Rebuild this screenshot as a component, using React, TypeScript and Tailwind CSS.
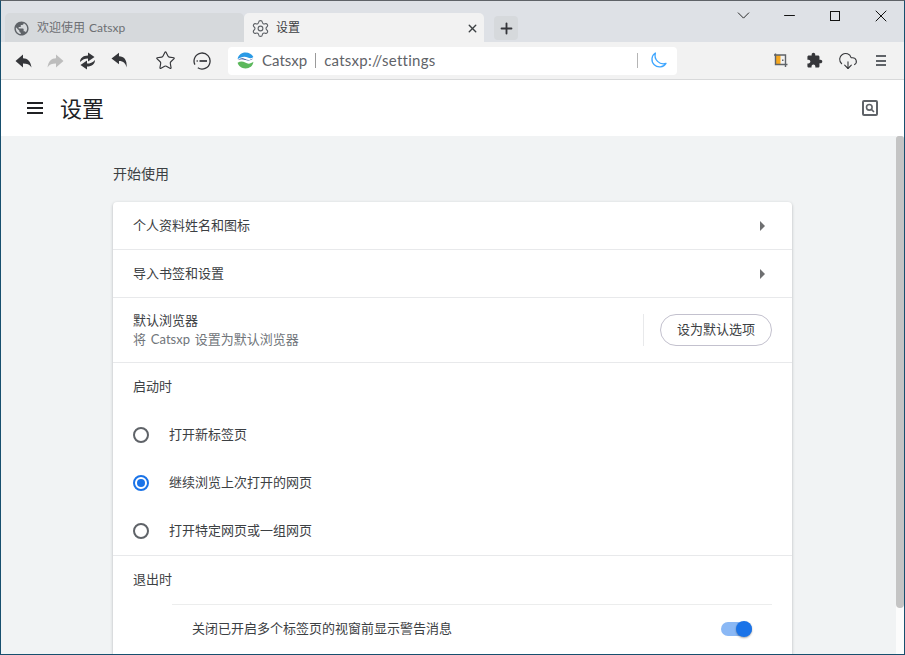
import { ChevronDown, CloudDownload, Minus, Plus, Settings, Star, X } from 'lucide-react'

const font = { fontFamily: '"Lato", "Noto Sans CJK SC", sans-serif' }

function Globe() {
  return (
    <svg width="17" height="17" viewBox="0 0 24 24" fill="#5f6368">
      <path d="M12 2C6.48 2 2 6.48 2 12s4.48 10 10 10 10-4.48 10-10S17.52 2 12 2zm-1 17.93c-3.95-.49-7-3.85-7-7.93 0-.62.08-1.21.21-1.79L9 15v1c0 1.1.9 2 2 2v1.93zm6.9-2.54c-.26-.81-1-1.39-1.9-1.39h-1v-3c0-.55-.45-1-1-1H8v-2h2c.55 0 1-.45 1-1V7h2c1.1 0 2-.9 2-2v-.41c2.93 1.19 5 4.06 5 7.41 0 2.08-.8 3.97-2.1 5.39z" />
    </svg>
  )
}

function Arrow({ color, flip }: { color: string; flip?: boolean }) {
  return (
    <svg width="17" height="16" viewBox="0 0 17 16" fill={color} className={flip ? '-scale-x-100' : ''}>
      <path d="M0.5 8 8 1.5V5.2C12.5 5.2 15.6 8 16.5 14.5 14.6 11.6 12 10.6 8 10.6V14.5Z" />
    </svg>
  )
}

function Reload() {
  return (
    <svg width="17" height="18" viewBox="0 0 17 18" fill="#35363a">
      <path d="M1 10C1 6.2 4 3.4 9 3.4V0.6L15.5 5 9 9.4V6.4C6 6.4 3.4 7.4 1 10Z" />
      <path d="M16 8C16 11.8 13 14.6 8 14.6V17.4L1.5 13 8 8.6V11.6C11 11.6 13.6 10.6 16 8Z" />
    </svg>
  )
}

function Undo() {
  return (
    <svg width="17" height="17" viewBox="0 0 17 17" fill="#35363a">
      <path d="M0.5 6.5 8 0.8V4.2C13 4.2 16.4 8 15.6 15.5 14.6 11.4 12.6 9 8 9V12.2Z" />
    </svg>
  )
}

function Reader() {
  return (
    <svg width="18" height="18" viewBox="0 0 18 18" fill="none" stroke="#35363a">
      <path d="M1.9 12.6A8 8 0 1 1 4.8 15.8" strokeWidth="1.3" />
      <path d="M6.5 9H14" strokeWidth="1.7" />
      <path d="M3.6 9H4.8" strokeWidth="1.7" />
    </svg>
  )
}

function Moon() {
  return (
    <svg width="17" height="17" viewBox="0 0 17 17" fill="none" stroke="#3ea6ff" strokeWidth="1.3">
      <path d="M5.4 1A7.6 7.6 0 1 0 16 11.4 8.4 8.4 0 0 1 5.4 1Z" strokeLinejoin="round" />
    </svg>
  )
}

function Logo() {
  return (
    <svg width="17" height="17" viewBox="0 0 17 17" fill="none">
      <path d="M0.6 7.2C1.4 3 4.4 0.6 8.5 0.6c3.6 0 6.3 1.6 7.9 4.4-1.6 1.5-3.6 1.8-5.6 0.6C8 4 4 4.6 0.6 7.2Z" fill="#2a9ae6" />
      <path d="M0.8 8.2C3 6.2 5.6 5.6 8 7c2.6 1.5 5.4 1.4 8.2-0.8-1.6 1.8-4.6 3-7.6 1.8C6 7 3.2 7 0.8 8.2Z" fill="#27408b" />
      <path d="M0.6 10.8C3 9.2 5.6 9 8.2 10.6c2.8 1.7 5.6 1.2 8.2-0.8-0.4 4.2-3.6 6.6-7.9 6.6-4 0-7-2.4-7.9-5.6Z" fill="#5cb85c" />
    </svg>
  )
}

function CropIcon() {
  return (
    <svg width="14" height="15" viewBox="0 0 14 15" fill="none">
      <rect x="2" y="2" width="4.5" height="9.5" fill="#f7a81f" />
      <path d="M1.5 0.5V11.5H13.5M0 2H11.5V14" stroke="#5f6368" strokeWidth="1.4" />
      <rect x="8" y="6.5" width="1.5" height="1.5" fill="#5f6368" />
    </svg>
  )
}

function Puzzle() {
  return (
    <svg width="17" height="17" viewBox="0 0 24 24" fill="#35363a">
      <path d="M20.5 11H19V7c0-1.1-.9-2-2-2h-4V3.5C13 2.12 11.88 1 10.5 1S8 2.12 8 3.5V5H4c-1.1 0-1.99.9-1.99 2v3.8H3.5c1.49 0 2.7 1.21 2.7 2.7s-1.21 2.7-2.7 2.7H2V20c0 1.1.9 2 2 2h3.8v-1.5c0-1.49 1.21-2.7 2.7-2.7 1.49 0 2.7 1.21 2.7 2.7V22H17c1.1 0 2-.9 2-2v-4h1.5c1.38 0 2.5-1.12 2.5-2.5S21.88 11 20.5 11z" />
    </svg>
  )
}

function Divider() {
  return <div className="h-px bg-[#e8e9eb]" />
}

function LinkRow({ label }: { label: string }) {
  return (
    <>
      <div className="flex h-[47px] items-center justify-between pl-5 pr-[27px]">
        <span>{label}</span>
        <span className="h-0 w-0 border-y-[5px] border-l-[5px] border-y-transparent border-l-[#6e6f71]" />
      </div>
      <Divider />
    </>
  )
}

function Radio({ label, checked }: { label: string; checked?: boolean }) {
  return (
    <div className="flex h-12 items-center gap-5 pl-5">
      <span
        className={`flex h-4 w-4 items-center justify-center rounded-full border-2 ${
          checked ? 'border-[#1a73e8]' : 'border-[#5f6368]'
        }`}
      >
        {checked && <span className="h-2 w-2 rounded-full bg-[#1a73e8]" />}
      </span>
      <span>{label}</span>
    </div>
  )
}

export default function App() {
  return (
    <div
      className="flex h-[655px] w-[905px] flex-col overflow-hidden border-y border-x border-b-[#174f6e] border-l-[#174f6e] border-r-[#174f6e] border-t-[#5f6368] bg-white text-[#3c4043]"
      style={font}
    >
      {/* tab strip */}
      <div className="flex h-[41px] shrink-0 items-end bg-[#dee1e6] pl-1">
        <div className="flex h-[29px] w-[239px] items-center gap-[7px] rounded-t-[5px] bg-[#d6d9dc] pl-2 pt-px text-xs text-[#6d6f73]">
          <Globe />
          <span className="whitespace-nowrap [word-spacing:1px]">欢迎使用 Catsxp</span>
        </div>
        <div className="flex h-[29px] w-[240px] items-center rounded-t-[5px] bg-[#f2f2f2] pl-[7px] pr-[5px] pt-px text-xs text-[#3c4043]">
          <Settings size={19} strokeWidth={1.4} color="#5f6368" />
          <span className="ml-1.5 flex-1">设置</span>
          <X size={13} strokeWidth={2.6} color="#3c4043" />
        </div>
        <div className="mb-0.5 ml-2.5 flex h-6 w-6 items-center justify-center self-end rounded-[4px] bg-[#d6d9dc]">
          <Plus size={17} strokeWidth={2.6} color="#35363a" />
        </div>
        <div className="mb-auto ml-auto flex h-[29px] items-center">
          <div className="flex w-[46px] justify-center">
            <ChevronDown size={21} strokeWidth={1.1} color="#222" />
          </div>
          <div className="flex w-[46px] justify-center">
            <Minus size={17} strokeWidth={1.4} color="#111" />
          </div>
          <div className="flex w-[46px] justify-center">
            <div className="h-[10px] w-[10px] border border-[#111]" />
          </div>
          <div className="flex w-[46px] justify-center">
            <X size={20} strokeWidth={1.2} color="#111" />
          </div>
        </div>
      </div>

      {/* toolbar */}
      <div className="flex h-[38px] shrink-0 items-center border-b border-[#d8d9da] bg-[#f2f2f2] pl-[14px]">
        <div className="flex w-[32px]">
          <Arrow color="#35363a" />
        </div>
        <div className="flex w-[32px]">
          <Arrow color="#bdbdbd" flip />
        </div>
        <div className="flex w-[32px]">
          <Reload />
        </div>
        <div className="flex w-[46px]">
          <Undo />
        </div>
        <div className="-ml-0.5 flex w-[38px]">
          <Star size={21} strokeWidth={1.3} color="#35363a" />
        </div>
        <div className="flex w-[35px]">
          <Reader />
        </div>
        <div className="flex h-7 w-[449px] items-center rounded-[4px] bg-white pl-[9px] pr-2.5 text-[15px] text-[#5f6368]">
          <Logo />
          <span className="ml-2">Catsxp</span>
          <span className="mx-2 h-[15px] w-px bg-[#9a9a9a]" />
          <span className="flex-1 tracking-[0.25px]">catsxp://settings</span>
          <span className="mr-3 h-[15px] w-px bg-[#b5b5b5]" />
          <Moon />
        </div>
        <div className="ml-[97px] flex w-[32px]">
          <CropIcon />
        </div>
        <div className="flex w-[32px]">
          <Puzzle />
        </div>
        <div className="flex w-[38px]">
          <CloudDownload size={20} strokeWidth={1.3} color="#35363a" />
        </div>
        <div className="flex w-[10px] flex-col gap-[2.5px]">
          <span className="h-[2px] bg-[#5f6368]" />
          <span className="h-[2px] bg-[#5f6368]" />
          <span className="h-[2px] bg-[#5f6368]" />
        </div>
      </div>

      {/* settings header */}
      <div className="flex h-14 shrink-0 items-center pl-[26px] pr-[26px]">
        <div className="flex w-4 flex-col gap-[3px]">
          <span className="h-[2px] bg-[#202124]" />
          <span className="h-[2px] bg-[#202124]" />
          <span className="h-[2px] bg-[#202124]" />
        </div>
        <h1 className="ml-[17px] flex-1 pt-px text-[22px] font-normal text-[#202124]">设置</h1>
        <div className="flex h-4 w-4 items-center justify-center rounded-[2px] border-2 border-[#5f6368]">
          <svg width="10" height="10" viewBox="0 0 10 10" fill="none" stroke="#5f6368" strokeWidth="1.6">
            <circle cx="4.3" cy="4.3" r="2.8" />
            <path d="M6.4 6.4 9 9" />
          </svg>
        </div>
      </div>

      {/* content */}
      <div className="flex min-h-0 flex-1">
        <main className="min-w-0 flex-1 overflow-hidden bg-[#f1f3f4] pl-[112px] pr-[104px] text-[13px]">
          <h2 className="flex h-[66px] items-center pt-2 text-[14px] font-normal text-[#3c4043]">开始使用</h2>
          <div className="rounded-[4px] bg-white shadow-[0_1px_3px_rgba(60,64,67,0.35)]">
            <LinkRow label="个人资料姓名和图标" />
            <LinkRow label="导入书签和设置" />
            <div className="flex h-16 items-center justify-between pl-5 pr-5">
              <div className="leading-[19px]">
                <div>默认浏览器</div>
                <div className="text-[#70757a] [word-spacing:1.5px]">将 Catsxp 设置为默认浏览器</div>
              </div>
              <div className="flex h-8 items-center gap-4 border-l border-[#e8e9eb] pl-4">
                <button
                  type="button"
                  className="flex h-8 w-[112px] items-center justify-center rounded-full border border-[#c3c1ce] bg-white text-[13px] text-[#3c4043]"
                >
                  设为默认选项
                </button>
              </div>
            </div>
            <Divider />
            <div className="flex h-12 items-center pl-5">启动时</div>
            <Radio label="打开新标签页" />
            <Radio label="继续浏览上次打开的网页" checked />
            <Radio label="打开特定网页或一组网页" />
            <Divider />
            <div className="flex h-12 items-center pl-5">退出时</div>
            <div className="ml-[59px] mr-5 flex h-12 items-center justify-between border-t border-[#eceded] pl-5 pr-5">
              <span>关闭已开启多个标签页的视窗前显示警告消息</span>
              <span className="relative h-[14px] w-[31px] rounded-full bg-[#8ab8f5]">
                <span className="absolute -top-[1px] right-0 h-4 w-4 rounded-full bg-[#1a73e8] shadow-[0_1px_2px_rgba(0,0,0,0.35)]" />
              </span>
            </div>
            <div className="h-10" />
          </div>
        </main>
        <div className="w-2 shrink-0 bg-[#fcfcfc]">
          <div className="h-[472px] rounded-t-sm rounded-b-md bg-[#c4c4c4]" />
        </div>
      </div>
    </div>
  )
}
